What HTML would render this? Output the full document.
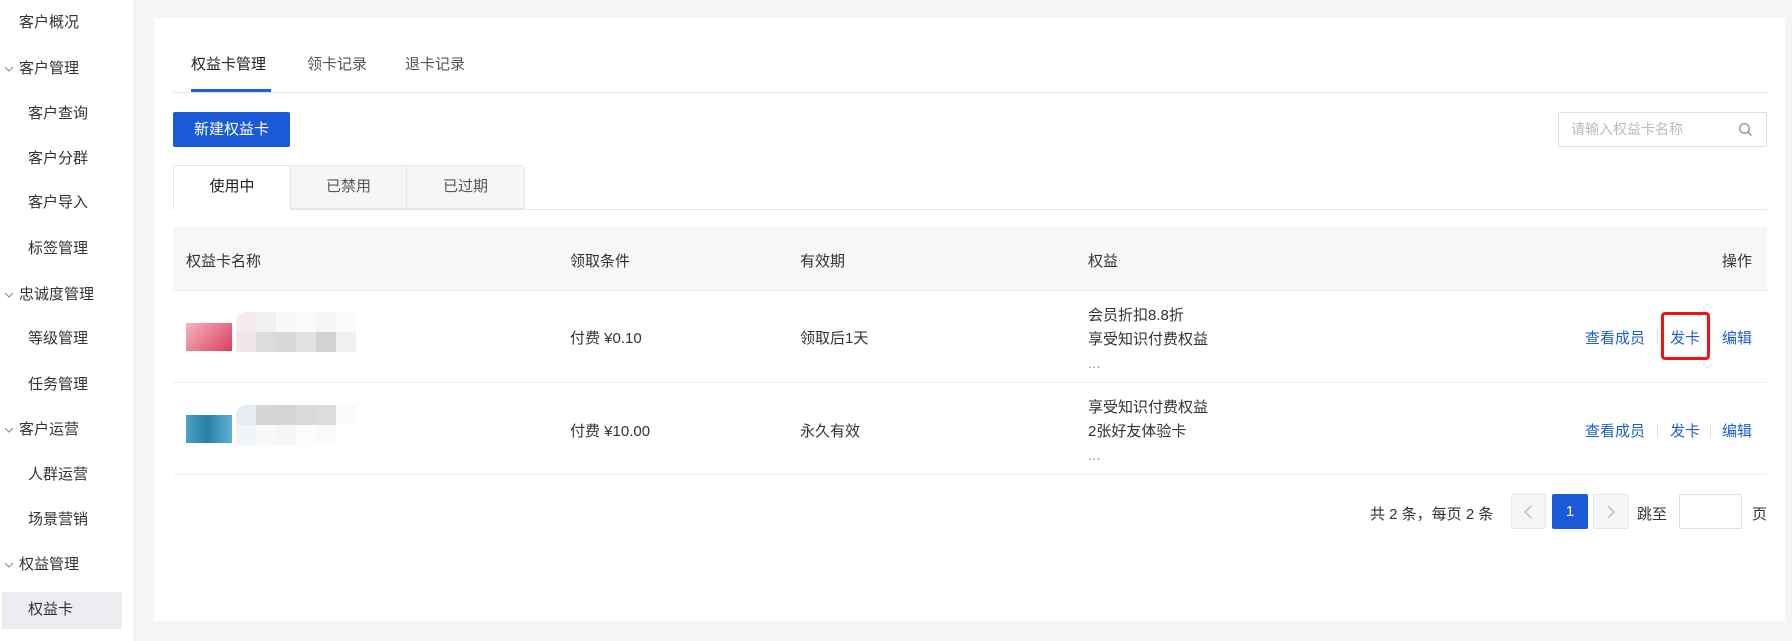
<!DOCTYPE html>
<html><head><meta charset="utf-8"><style>
*{margin:0;padding:0;box-sizing:border-box}
body{width:1792px;height:641px;background:#f4f5f7;font-family:"Liberation Sans","Noto Sans CJK SC",sans-serif;color:#333;position:relative;overflow:hidden;font-size:15px}
.a{position:absolute;white-space:nowrap}
.side{position:absolute;left:0;top:0;width:135px;height:641px;background:#fff;border-right:1px solid #e8e8e8}
.si{position:absolute;font-size:15px;color:#333;line-height:20px}
.cv{position:absolute;width:10px;height:6px}
.card{position:absolute;left:154px;top:18px;width:1631px;height:603px;background:#fff}
.blue{color:#1a5fd6}
.blk{position:absolute;width:20px;height:20px}
</style></head><body>
<div class="side">
<div class="si" style="left:19px;top:13px">客户概况</div>
<svg class="cv" style="left:4px;top:66px" viewBox="0 0 10 6"><path d="M1 1l4 4 4-4" fill="none" stroke="#888" stroke-width="1"/></svg>
<div class="si" style="left:19px;top:59px">客户管理</div>
<div class="si" style="left:28px;top:104px">客户查询</div>
<div class="si" style="left:28px;top:149px">客户分群</div>
<div class="si" style="left:28px;top:193px">客户导入</div>
<div class="si" style="left:28px;top:239px">标签管理</div>
<svg class="cv" style="left:4px;top:292px" viewBox="0 0 10 6"><path d="M1 1l4 4 4-4" fill="none" stroke="#888" stroke-width="1"/></svg>
<div class="si" style="left:19px;top:285px">忠诚度管理</div>
<div class="si" style="left:28px;top:329px">等级管理</div>
<div class="si" style="left:28px;top:375px">任务管理</div>
<svg class="cv" style="left:4px;top:427px" viewBox="0 0 10 6"><path d="M1 1l4 4 4-4" fill="none" stroke="#888" stroke-width="1"/></svg>
<div class="si" style="left:19px;top:420px">客户运营</div>
<div class="si" style="left:28px;top:465px">人群运营</div>
<div class="si" style="left:28px;top:510px">场景营销</div>
<svg class="cv" style="left:4px;top:562px" viewBox="0 0 10 6"><path d="M1 1l4 4 4-4" fill="none" stroke="#888" stroke-width="1"/></svg>
<div class="si" style="left:19px;top:555px">权益管理</div>
<div style="position:absolute;left:2px;top:592px;width:120px;height:37px;background:#ebedf0"></div>
<div class="si" style="left:28px;top:600px">权益卡</div>
</div>
<div class="card"></div>
<div class="a" style="left:191px;top:53px;font-size:15px;color:#222">权益卡管理</div>
<div class="a" style="left:307px;top:53px;font-size:15px;color:#555">领卡记录</div>
<div class="a" style="left:405px;top:53px;font-size:15px;color:#555">退卡记录</div>
<div class="a" style="left:173px;top:92px;width:1594px;height:1px;background:#e4e6ea"></div>
<div class="a" style="left:191px;top:89px;width:80px;height:3px;background:#1a5fd6"></div>
<div class="a" style="left:173px;top:112px;width:117px;height:35px;background:#1a5ad7;border-radius:2px;color:#fff;font-size:15px;line-height:35px;text-align:center">新建权益卡</div>
<div class="a" style="left:1558px;top:112px;width:209px;height:35px;border:1px solid #dcdfe6;border-radius:2px;color:#bbb;font-size:14px;line-height:33px;padding-left:12px">请输入权益卡名称</div>
<svg class="a" style="left:1738px;top:122px" width="15" height="15" viewBox="0 0 15 15"><circle cx="6.5" cy="6.5" r="4.8" fill="none" stroke="#999" stroke-width="1.5"/><path d="M10 10l3.5 3.5" stroke="#999" stroke-width="1.5"/></svg>
<div class="a" style="left:173px;top:209px;width:1594px;height:1px;background:#e4e6ea"></div>
<div class="a" style="left:290px;top:165px;width:117px;height:44px;background:#f5f6f8;border:1px solid #e4e6ea;color:#555;line-height:42px;text-align:center">已禁用</div>
<div class="a" style="left:407px;top:165px;width:118px;height:44px;background:#f5f6f8;border:1px solid #e4e6ea;border-left:none;border-radius:0 3px 0 0;color:#555;line-height:42px;text-align:center">已过期</div>
<div class="a" style="left:173px;top:165px;width:118px;height:45px;background:#fff;border:1px solid #e4e6ea;border-bottom:none;border-radius:3px 0 0 0;color:#222;line-height:42px;text-align:center">使用中</div>
<div class="a" style="left:173px;top:227px;width:1594px;height:64px;background:#f6f7f9;border-bottom:1px solid #eceef1"></div>
<div class="a" style="left:186px;top:250px">权益卡名称</div>
<div class="a" style="left:570px;top:250px">领取条件</div>
<div class="a" style="left:800px;top:250px">有效期</div>
<div class="a" style="left:1088px;top:250px">权益</div>
<div class="a" style="left:1722px;top:250px">操作</div>
<div class="a" style="left:173px;top:382px;width:1594px;height:1px;background:#eceef1"></div>
<div class="a" style="left:186px;top:323px;width:46px;height:28px;background:linear-gradient(135deg,#f7b4c2,#d8405e)"></div>
<div class="blk" style="left:236px;top:312px;background:#f7eced;border-radius:10px 0 0 0"></div><div class="blk" style="left:256px;top:312px;background:#f1f1f1"></div><div class="blk" style="left:276px;top:312px;background:#f9f9f9"></div><div class="blk" style="left:296px;top:312px;background:#fafafa"></div><div class="blk" style="left:316px;top:312px;background:#f6f6f6"></div><div class="blk" style="left:336px;top:312px;background:#fbfbfb"></div>
<div class="blk" style="left:236px;top:332px;background:#f3e6e8"></div><div class="blk" style="left:256px;top:332px;background:#dcdcdc"></div><div class="blk" style="left:276px;top:332px;background:#d8d8d8"></div><div class="blk" style="left:296px;top:332px;background:#e2e2e0"></div><div class="blk" style="left:316px;top:332px;background:#d2d2d4"></div><div class="blk" style="left:336px;top:332px;background:#eff0f0"></div>
<div class="a" style="left:570px;top:327px">付费 ¥0.10</div>
<div class="a" style="left:800px;top:327px">领取后1天</div>
<div class="a" style="left:1088px;top:304px;line-height:24px">会员折扣8.8折<br>享受知识付费权益<br><span style="color:#999">...</span></div>
<div class="a blue" style="left:1585px;top:327px">查看成员</div>
<div class="a" style="left:1657px;top:330px;width:1px;height:14px;background:#ddd"></div>
<div class="a blue" style="left:1670px;top:327px">发卡</div>
<div class="a blue" style="left:1722px;top:327px">编辑</div>
<div class="a" style="left:1661px;top:312px;width:49px;height:48px;border:3px solid #f01414;border-radius:4px"></div>
<div class="a" style="left:173px;top:474px;width:1594px;height:1px;background:#eceef1"></div>
<div class="a" style="left:186px;top:415px;width:46px;height:28px;background:linear-gradient(90deg,#4aa3c8,#2a7fa8 45%,#5fb0d0)"></div>
<div class="blk" style="left:236px;top:405px;background:#e6ecf0;border-radius:10px 0 0 0"></div><div class="blk" style="left:256px;top:405px;background:#d5d5d5"></div><div class="blk" style="left:276px;top:405px;background:#d6d3d8"></div><div class="blk" style="left:296px;top:405px;background:#dadada"></div><div class="blk" style="left:316px;top:405px;background:#dcdcdc"></div><div class="blk" style="left:336px;top:405px;background:#fafafa"></div>
<div class="blk" style="left:236px;top:425px;background:#f2f5f8"></div><div class="blk" style="left:256px;top:425px;background:#f9f9f9"></div><div class="blk" style="left:276px;top:425px;background:#f6f6f6"></div><div class="blk" style="left:296px;top:425px;background:#fdfdfd"></div><div class="blk" style="left:316px;top:425px;background:#fafafa"></div>
<div class="a" style="left:570px;top:420px">付费 ¥10.00</div>
<div class="a" style="left:800px;top:420px">永久有效</div>
<div class="a" style="left:1088px;top:396px;line-height:24px">享受知识付费权益<br>2张好友体验卡<br><span style="color:#999">...</span></div>
<div class="a blue" style="left:1585px;top:420px">查看成员</div>
<div class="a" style="left:1657px;top:423px;width:1px;height:14px;background:#ddd"></div>
<div class="a blue" style="left:1670px;top:420px">发卡</div>
<div class="a" style="left:1710px;top:423px;width:1px;height:14px;background:#ddd"></div>
<div class="a blue" style="left:1722px;top:420px">编辑</div>
<div class="a" style="left:1370px;top:503px">共 2 条，每页 2 条</div>
<div class="a" style="left:1511px;top:494px;width:35px;height:35px;background:#f5f6f8;border:1px solid #e6e8eb;border-radius:2px"></div>
<svg class="a" style="left:1522px;top:504px" width="12" height="16"><path d="M9 2L3 8l6 6" fill="none" stroke="#bbb" stroke-width="1.5"/></svg>
<div class="a" style="left:1552px;top:494px;width:36px;height:35px;background:#1a5ad7;border-radius:2px;color:#fff;text-align:center;line-height:35px">1</div>
<div class="a" style="left:1593px;top:494px;width:36px;height:35px;background:#f5f6f8;border:1px solid #e6e8eb;border-radius:2px"></div>
<svg class="a" style="left:1605px;top:504px" width="12" height="16"><path d="M3 2l6 6-6 6" fill="none" stroke="#bbb" stroke-width="1.5"/></svg>
<div class="a" style="left:1637px;top:503px">跳至</div>
<div class="a" style="left:1679px;top:494px;width:63px;height:35px;border:1px solid #dcdfe6;border-radius:2px;background:#fff"></div>
<div class="a" style="left:1752px;top:503px">页</div>
</body></html>
